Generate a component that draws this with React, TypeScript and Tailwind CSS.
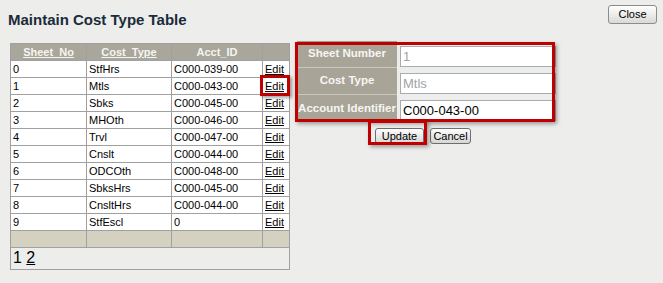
const rows = [
  ['0', 'StfHrs', 'C000-039-00'],
  ['1', 'Mtls', 'C000-043-00'],
  ['2', 'Sbks', 'C000-045-00'],
  ['3', 'MHOth', 'C000-046-00'],
  ['4', 'Trvl', 'C000-047-00'],
  ['5', 'Cnslt', 'C000-044-00'],
  ['6', 'ODCOth', 'C000-048-00'],
  ['7', 'SbksHrs', 'C000-045-00'],
  ['8', 'CnsltHrs', 'C000-044-00'],
  ['9', 'StfEscl', '0'],
]

const fields = [
  { label: 'Sheet Number', value: '1', disabled: true },
  { label: 'Cost Type', value: 'Mtls', disabled: true },
  { label: 'Account Identifier', value: 'C000-043-00', disabled: false },
]

export default function App() {
  return (
    <div className="relative h-[283px] w-[663px] overflow-hidden bg-[#ededeb] font-['Liberation_Sans',Arial,sans-serif]">
      <div className="flex items-start justify-between pl-2 pr-[6px] pt-[5px]">
        <h1 className="mt-[6px] text-[15px] leading-[17px] font-bold text-[#1a2b3a]">Maintain Cost Type Table</h1>
        <button className="h-[19px] w-[49px] rounded-[3px] border border-[#8c8c8c] bg-linear-to-b from-white to-[#d9d9d7] text-[11px] leading-[17px] text-black">
          Close
        </button>
      </div>

      <div className="mt-[13px] flex items-start pl-[10px]">
        {/* list */}
        <table className="mt-[2px] w-[279px] table-fixed border-collapse text-[11px] leading-[16px] text-black">
          <colgroup>
            <col className="w-[76px]" />
            <col className="w-[85px]" />
            <col className="w-[91px]" />
            <col className="w-[27px]" />
          </colgroup>
          <thead>
            <tr className="bg-[#a9a69b] font-bold text-[#f6f5f0]">
              <th className="border border-[#a0a0a0] p-0 text-center font-bold">
                <span className="underline">Sheet_No</span>
              </th>
              <th className="border border-[#a0a0a0] p-0 text-center font-bold">
                <span className="underline">Cost_Type</span>
              </th>
              <th className="border border-[#a0a0a0] p-0 text-center font-bold">Acct_ID</th>
              <th className="border border-[#a0a0a0] p-0">&nbsp;</th>
            </tr>
          </thead>
          <tbody>
            {rows.map(r => (
              <tr key={r[0]} className="bg-white">
                <td className="border border-[#a0a0a0] py-0 pl-[2px]">{r[0]}</td>
                <td className="border border-[#a0a0a0] py-0 pl-[2px]">{r[1]}</td>
                <td className="border border-[#a0a0a0] py-0 pl-[2px]">{r[2]}</td>
                <td className="border border-[#a0a0a0] py-0 pl-[2px]">
                  <span className="underline">Edit</span>
                </td>
              </tr>
            ))}
            <tr className="bg-[#d5d1c1]">
              <td className="border border-[#a0a0a0] p-0">&nbsp;</td>
              <td className="border border-[#a0a0a0] p-0">&nbsp;</td>
              <td className="border border-[#a0a0a0] p-0">&nbsp;</td>
              <td className="border border-[#a0a0a0] p-0">&nbsp;</td>
            </tr>
            <tr>
              <td colSpan={4} className="border border-[#a0a0a0] pt-[1px] pb-[2px] pl-[2px] text-[16px] leading-[18px]">
                1 <span className="underline">2</span>
              </td>
            </tr>
          </tbody>
        </table>

        {/* edit form */}
        <div className="ml-[7px]">
          <div className="w-[260px]">
            {fields.map((f, i) => (
              <div key={f.label} className="flex h-[27px]">
                <div
                  className={`flex w-[100px] items-center justify-center bg-[#a8a598] text-[11.5px] font-bold whitespace-nowrap text-[#f7f6f2] ${i < 2 ? 'border-b border-[#c9c7bf]' : ''}`}
                >
                  {f.label}
                </div>
                <div className="pt-[3px] pl-[3px]">
                  <input
                    readOnly
                    value={f.value}
                    className={`h-[21px] w-[156px] border border-[#a5acb2] bg-white pl-[2px] text-[13px] outline-none ${f.disabled ? 'text-[#a3a3a3]' : 'text-black'}`}
                  />
                </div>
              </div>
            ))}
          </div>
          <div className="mt-[6px] flex gap-[6px] pl-[78px]">
            <button className="h-[16px] w-[49px] rounded-[3px] border border-[#6e6e6e] bg-linear-to-b from-white to-[#d6d6d4] text-[11px] leading-[14px] text-black">
              Update
            </button>
            <button className="h-[16px] w-[41px] rounded-[3px] border border-[#6e6e6e] bg-linear-to-b from-white to-[#d6d6d4] text-[11px] leading-[14px] text-black">
              Cancel
            </button>
          </div>
        </div>
      </div>

      {/* annotation boxes */}
      <div className="absolute top-[75px] left-[260px] h-[21px] w-[30px] border-[3px] border-[#c00000] shadow-[2px_2px_3px_rgba(0,0,0,0.35)]" />
      <div className="absolute top-[42px] left-[295px] h-[80px] w-[260px] border-[3px] border-[#c00000] shadow-[2px_2px_4px_rgba(0,0,0,0.35)]" />
      <div className="absolute top-[120px] left-[368px] h-[25px] w-[59px] border-[3px] border-[#c00000] shadow-[2px_2px_4px_rgba(0,0,0,0.35)]" />
    </div>
  )
}
